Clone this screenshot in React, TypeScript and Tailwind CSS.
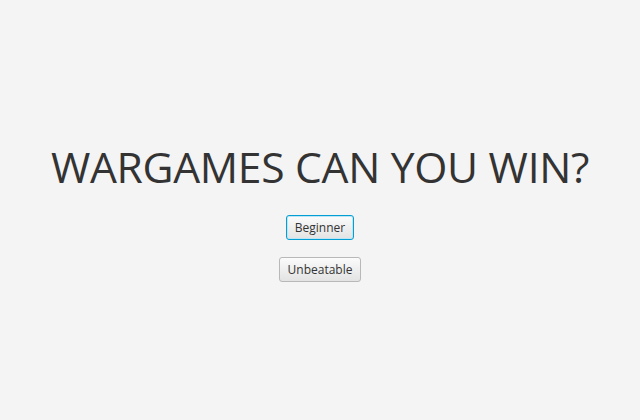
export default function App() {
  const btn =
    "h-[25px] rounded-[3px] border text-[12px] text-[#333] bg-gradient-to-b from-[#fbfbfb] to-[#e3e3e3] flex items-center justify-center";

  return (
    <div
      className="w-[640px] h-[420px] bg-[#f4f4f4] flex flex-col items-center pt-[137px]"
      style={{ fontFamily: '"Open Sans", "Segoe UI", sans-serif' }}
    >
      <h1 className="text-[42.6px] leading-[58px] text-[#333] tracking-[-0.3px]">
        WARGAMES CAN YOU WIN?
      </h1>
      <button
        className={`${btn} mt-[20px] w-[68px] border-[#039ed3] shadow-[inset_0_0_0_1px_#bfe4f4]`}
      >
        Beginner
      </button>
      <button className={`${btn} mt-[17px] w-[82px] border-[#b8b8b8]`}>
        Unbeatable
      </button>
    </div>
  );
}
